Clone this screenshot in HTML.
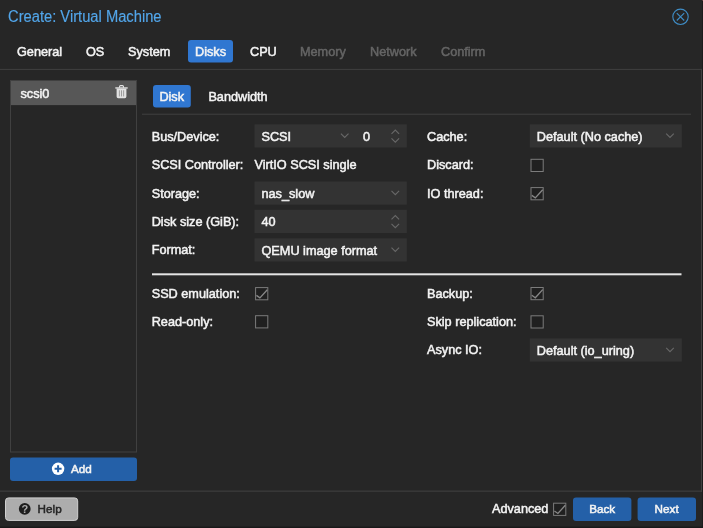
<!DOCTYPE html>
<html><head><meta charset="utf-8"><title>Create: Virtual Machine</title>
<style>
html,body{margin:0;padding:0;}
body{width:703px;height:528px;overflow:hidden;background:#262626;position:relative;
 font-family:"Liberation Sans",Helvetica,Arial,sans-serif;font-size:12.7px;color:#f4f4f4;-webkit-text-stroke:0.5px currentColor;}
#w{position:absolute;left:0;top:0;width:703px;height:528px;will-change:transform;}
.a{position:absolute;white-space:nowrap;line-height:16px;}
.dis{color:#656565;}
.bt{font-size:11.700px;}
svg{position:absolute;left:0;top:0;overflow:visible;}
</style></head><body><div id="w">
<svg width="703" height="528" viewBox="0 0 703 528">
<rect x="702.00" y="0.00" width="1.00" height="528.00" fill="#1c1c1c"/>
<rect x="0.00" y="526.60" width="703.00" height="1.40" fill="#191919"/>
<rect x="702.00" y="0.00" width="1.00" height="1.00" fill="#5a3c3e"/>
<circle cx="680.500" cy="16.800" r="7.700" fill="none" stroke="#3f8dc6" stroke-width="1.100"/>
<path d="M676.800 13.100l7.400 7.400M684.200 13.100l-7.400 7.400" fill="none" stroke="#3f8dc6" stroke-width="1.1"/>
<rect x="188.00" y="40.00" width="45.00" height="22.50" rx="3" fill="#3077d1"/>
<rect x="0.00" y="68.90" width="702.00" height="1.00" fill="#404040"/>
<rect x="701.00" y="68.90" width="1.00" height="423.00" fill="#404040"/>
<rect x="0.00" y="490.60" width="702.00" height="1.00" fill="#434343"/>
<rect x="11.00" y="81.00" width="125.80" height="24.10" fill="#575757"/>
<rect x="10.50" y="80.50" width="126.00" height="371.50" fill="none" stroke="#404040" stroke-width="1"/>
<path d="M119.50 87.70v-1q0-1.100 1.100-1.100h1.800q1.100 0 1.100 1.100v1" fill="none" stroke="#e6e6e6" stroke-width="1.1"/>
<rect x="115.30" y="87.30" width="12.40" height="1.30" fill="#e6e6e6"/>
<path d="M116.60 88.50h9.800v8.100q0 1.600-1.600 1.600h-6.600q-1.600 0-1.600-1.600z" fill="#e2e2e2"/>
<path d="M119.40 90.30v6.100M121.50 90.30v6.100M123.60 90.30v6.100" fill="none" stroke="#8c8c8c" stroke-width="0.8"/>
<rect x="10.00" y="457.40" width="127.00" height="23.50" rx="3" fill="#2460a8"/>
<circle cx="58.100" cy="468.800" r="6.200" fill="#fff"/>
<path d="M58.100 465.300v7M54.600 468.800h7" fill="none" stroke="#2460a8" stroke-width="2"/>
<rect x="153.00" y="85.10" width="37.80" height="22.30" rx="3" fill="#3077d1"/>
<rect x="142.00" y="113.70" width="549.00" height="1.00" fill="#404040"/>
<rect x="254.50" y="124.30" width="152.30" height="23.20" fill="#333333"/>
<rect x="254.50" y="181.50" width="152.30" height="23.20" fill="#333333"/>
<rect x="254.50" y="209.80" width="152.30" height="23.20" fill="#333333"/>
<rect x="254.50" y="238.30" width="152.30" height="23.20" fill="#333333"/>
<rect x="529.80" y="124.30" width="152.00" height="23.20" fill="#333333"/>
<rect x="531.00" y="159.30" width="12.20" height="12.20" fill="#202020" stroke="#7c7c7c" stroke-width="1"/>
<rect x="531.00" y="187.60" width="12.20" height="12.20" fill="#202020" stroke="#7c7c7c" stroke-width="1"/>
<path d="M531.80 195.40L535.30 197.90L542.70 189.70" fill="none" stroke="#888888" stroke-width="1.3"/>
<rect x="152.00" y="273.30" width="529.50" height="2.00" fill="#e4e4e4"/>
<rect x="255.60" y="287.60" width="12.20" height="12.20" fill="#202020" stroke="#7c7c7c" stroke-width="1"/>
<path d="M256.40 295.40L259.90 297.90L267.30 289.70" fill="none" stroke="#888888" stroke-width="1.3"/>
<rect x="255.60" y="315.70" width="12.20" height="12.20" fill="#202020" stroke="#7c7c7c" stroke-width="1"/>
<rect x="531.00" y="287.50" width="12.20" height="12.20" fill="#202020" stroke="#7c7c7c" stroke-width="1"/>
<path d="M531.80 295.30L535.30 297.80L542.70 289.60" fill="none" stroke="#888888" stroke-width="1.3"/>
<rect x="531.00" y="315.80" width="12.20" height="12.20" fill="#202020" stroke="#7c7c7c" stroke-width="1"/>
<rect x="529.80" y="338.40" width="152.00" height="23.20" fill="#333333"/>
<path d="M340.90 133.70L344.70 137.50L348.50 133.70" fill="none" stroke="#686868" stroke-width="1.1"/>
<path d="M391.50 133.80L395.30 130.00L399.10 133.80" fill="none" stroke="#686868" stroke-width="1.1"/>
<path d="M391.50 138.40L395.30 142.20L399.10 138.40" fill="none" stroke="#686868" stroke-width="1.1"/>
<path d="M391.50 190.90L395.30 194.70L399.10 190.90" fill="none" stroke="#686868" stroke-width="1.1"/>
<path d="M391.50 219.30L395.30 215.50L399.10 219.30" fill="none" stroke="#686868" stroke-width="1.1"/>
<path d="M391.50 223.90L395.30 227.70L399.10 223.90" fill="none" stroke="#686868" stroke-width="1.1"/>
<path d="M391.50 247.70L395.30 251.50L399.10 247.70" fill="none" stroke="#686868" stroke-width="1.1"/>
<path d="M666.20 133.70L670.00 137.50L673.80 133.70" fill="none" stroke="#686868" stroke-width="1.1"/>
<path d="M666.20 347.80L670.00 351.60L673.80 347.80" fill="none" stroke="#686868" stroke-width="1.1"/>
<rect x="5.50" y="497.90" width="72.20" height="22.50" rx="3" fill="#adadad" stroke="#d0d0d0" stroke-width="1"/>
<circle cx="24.750" cy="508.950" r="5.900" fill="#1e1e1e"/>
<text x="24.850" y="512.950" text-anchor="middle" font-family="Liberation Sans,sans-serif" font-weight="bold" font-size="11" fill="#adadad">?</text>
<rect x="553.60" y="503.20" width="12.20" height="12.20" fill="#202020" stroke="#7c7c7c" stroke-width="1"/>
<path d="M554.40 511.00L557.90 513.50L565.30 505.30" fill="none" stroke="#888888" stroke-width="1.3"/>
<rect x="573.00" y="497.50" width="58.40" height="23.40" rx="3" fill="#2460a8"/>
<rect x="637.60" y="497.50" width="58.40" height="23.40" rx="3" fill="#2460a8"/>
</svg>
<div class="a" style="left:8px;top:6.600px;font-size:15.600px;line-height:20px;color:#52a6ea;-webkit-text-stroke:0.150px currentColor;transform:scaleX(0.944);transform-origin:0 0">Create: Virtual Machine</div>
<div class="a" style="left:17px;top:43.60px;">General</div>
<div class="a" style="left:86px;top:43.60px;">OS</div>
<div class="a" style="left:128px;top:43.60px;">System</div>
<div class="a" style="left:195px;top:43.60px;">Disks</div>
<div class="a" style="left:250px;top:43.60px;">CPU</div>
<div class="a dis" style="left:300px;top:43.60px;">Memory</div>
<div class="a dis" style="left:370px;top:43.60px;">Network</div>
<div class="a dis" style="left:441px;top:43.60px;">Confirm</div>
<div class="a" style="left:20.5px;top:85.60px;">scsi0</div>
<div class="a bt" style="left:71px;top:460.60px;">Add</div>
<div class="a" style="left:159.4px;top:88.60px;">Disk</div>
<div class="a" style="left:208.4px;top:88.60px;">Bandwidth</div>
<div class="a" style="left:151.7px;top:128.60px;">Bus/Device:</div>
<div class="a" style="left:261.5px;top:128.60px;">SCSI</div>
<div class="a" style="left:362.9px;top:128.60px;">0</div>
<div class="a" style="left:151.7px;top:156.60px;">SCSI Controller:</div>
<div class="a" style="left:254.5px;top:156.60px;">VirtIO SCSI single</div>
<div class="a" style="left:151.7px;top:185.60px;">Storage:</div>
<div class="a" style="left:261.5px;top:185.60px;">nas_slow</div>
<div class="a" style="left:151.7px;top:213.60px;">Disk size (GiB):</div>
<div class="a" style="left:261.5px;top:213.60px;">40</div>
<div class="a" style="left:151.7px;top:241.60px;">Format:</div>
<div class="a" style="left:261.5px;top:242.60px;">QEMU image format</div>
<div class="a" style="left:427px;top:128.60px;">Cache:</div>
<div class="a" style="left:536.8px;top:128.60px;">Default (No cache)</div>
<div class="a" style="left:427px;top:156.60px;">Discard:</div>
<div class="a" style="left:427px;top:185.60px;">IO thread:</div>
<div class="a" style="left:151.7px;top:285.60px;">SSD emulation:</div>
<div class="a" style="left:151.7px;top:313.60px;">Read-only:</div>
<div class="a" style="left:427px;top:285.60px;">Backup:</div>
<div class="a" style="left:427px;top:313.60px;">Skip replication:</div>
<div class="a" style="left:427px;top:341.60px;">Async IO:</div>
<div class="a" style="left:536.8px;top:342.60px;">Default (io_uring)</div>
<div class="a bt" style="left:37.6px;top:500.60px;color:#262626">Help</div>
<div class="a" style="left:492px;top:500.60px;">Advanced</div>
<div class="a bt" style="left:589.2px;top:500.60px;">Back</div>
<div class="a bt" style="left:654.6px;top:500.60px;">Next</div>
</div></body></html>
